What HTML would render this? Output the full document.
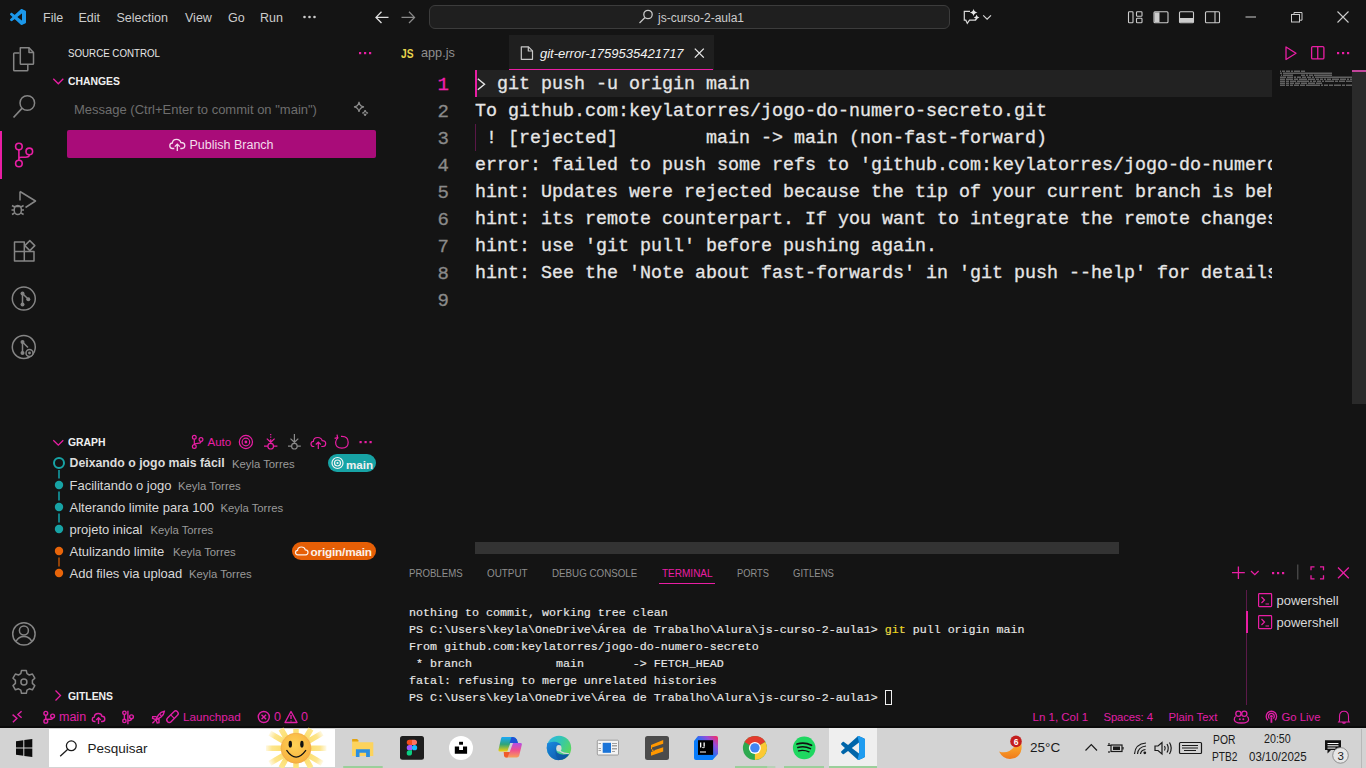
<!DOCTYPE html>
<html><head><meta charset="utf-8">
<style>
*{margin:0;padding:0;box-sizing:border-box}
html,body{width:1366px;height:768px;overflow:hidden;background:#141414;font-family:"Liberation Sans",sans-serif;color:#ccc}
.a{position:absolute;white-space:pre;line-height:1}
.ed{position:absolute;white-space:pre;font-family:"Liberation Mono",monospace;font-size:18.33px;color:#e6e6e6;line-height:27px;left:475px;margin-top:1px;-webkit-text-stroke:0.3px #e6e6e6;width:797px;overflow:hidden}
.ln{position:absolute;font-family:"Liberation Mono",monospace;font-size:19px;color:#8a8a8a;line-height:27px;left:420px;width:29px;text-align:right;margin-top:1.5px;-webkit-text-stroke:0.3px currentColor}
.term{position:absolute;white-space:pre;font-family:"Liberation Mono",monospace;font-size:11.67px;color:#e8e8e8;line-height:17px;left:409px;margin-top:1px;-webkit-text-stroke:0.15px #e8e8e8}
.pk{color:#e91e9f}
#ov{position:absolute;left:0;top:0;width:1366px;height:768px;overflow:visible}
</style></head><body>

<!-- ============ TITLE BAR ============ -->
<div class="a" style="left:429px;top:5px;width:521px;height:24px;border:1px solid #3c3c3c;border-radius:6px;background:#1f1f1f"></div>
<div class="a" style="left:43px;top:12px;font-size:12.5px;color:#cccccc">File</div>
<div class="a" style="left:78.5px;top:12px;font-size:12.5px;color:#cccccc">Edit</div>
<div class="a" style="left:116.5px;top:12px;font-size:12.5px;color:#cccccc">Selection</div>
<div class="a" style="left:185px;top:12px;font-size:12.5px;color:#cccccc">View</div>
<div class="a" style="left:228px;top:12px;font-size:12.5px;color:#cccccc">Go</div>
<div class="a" style="left:260px;top:12px;font-size:12.5px;color:#cccccc">Run</div>
<div class="a" style="left:658px;top:12px;font-size:12px;color:#cccccc">js-curso-2-aula1</div>

<!-- ============ ACTIVITY BAR ============ -->
<div class="a" style="left:0;top:131px;width:2px;height:48px;background:#e91ea4"></div>

<!-- ============ SIDEBAR ============ -->
<div class="a" style="left:68px;top:48px;font-size:11px;color:#e6e6e6;transform:scaleX(0.885);transform-origin:0 0">SOURCE CONTROL</div>
<div class="a" style="left:68px;top:76px;font-size:11px;font-weight:bold;color:#f0f0f0;transform:scaleX(0.945);transform-origin:0 0">CHANGES</div>
<div class="a" style="left:74px;top:103px;font-size:13px;color:#6e6e6e">Message (Ctrl+Enter to commit on "main")</div>
<div class="a" style="left:67px;top:130px;width:309px;height:28px;background:#a90c79;border-radius:2px"></div>
<div class="a" style="left:189.5px;top:139px;font-size:12.5px;color:#f4dcec">Publish Branch</div>


<div class="a" style="left:68px;top:437px;font-size:11px;font-weight:bold;color:#f0f0f0;transform:scaleX(0.945);transform-origin:0 0">GRAPH</div>
<div class="a" style="left:207.5px;top:436.5px;font-size:11.5px;color:#e91ea4">Auto</div>
<div class="a" style="left:69.5px;top:457.0px;font-size:12.3px;font-weight:bold;color:#dcdcdc">Deixando o jogo mais fácil</div>
<div class="a" style="left:232px;top:458.5px;font-size:11.3px;color:#9a9a9a">Keyla Torres</div>
<div class="a" style="left:69.5px;top:479.0px;font-size:13px;color:#d8d8d8">Facilitando o jogo</div>
<div class="a" style="left:178px;top:480.5px;font-size:11.3px;color:#9a9a9a">Keyla Torres</div>
<div class="a" style="left:69.5px;top:501.0px;font-size:13px;color:#d8d8d8">Alterando limite para 100</div>
<div class="a" style="left:220.5px;top:502.5px;font-size:11.3px;color:#9a9a9a">Keyla Torres</div>
<div class="a" style="left:69.5px;top:523.0px;font-size:13px;color:#d8d8d8">projeto inical</div>
<div class="a" style="left:150.5px;top:524.5px;font-size:11.3px;color:#9a9a9a">Keyla Torres</div>
<div class="a" style="left:69.5px;top:545.0px;font-size:13px;color:#d8d8d8">Atulizando limite</div>
<div class="a" style="left:173px;top:546.5px;font-size:11.3px;color:#9a9a9a">Keyla Torres</div>
<div class="a" style="left:69.5px;top:567.0px;font-size:13px;color:#d8d8d8">Add files via upload</div>
<div class="a" style="left:189px;top:568.5px;font-size:11.3px;color:#9a9a9a">Keyla Torres</div>
<div class="a" style="left:328px;top:454px;width:48px;height:18px;border-radius:9px;background:#17a3a5"></div>
<div class="a" style="left:346px;top:459px;font-size:11.6px;font-weight:bold;color:#f0f0f0">main</div>
<div class="a" style="left:292px;top:542px;width:84px;height:18px;border-radius:9px;background:#e65f06"></div>
<div class="a" style="left:310.5px;top:546.5px;font-size:11.8px;font-weight:bold;color:#fbf1ea;letter-spacing:-0.2px">origin/main</div>
<div class="a" style="left:68px;top:691px;font-size:11px;font-weight:bold;color:#f0f0f0;transform:scaleX(0.945);transform-origin:0 0">GITLENS</div>

<!-- ============ EDITOR ============ -->
<div class="a" style="left:509px;top:35px;width:205px;height:35px;background:#1f1f1f"></div>
<div class="a" style="left:509px;top:68.8px;width:204px;height:1.3px;background:#e91ea4"></div>
<div class="a" style="left:477px;top:70px;width:795px;height:27px;background:#222"></div>
<div class="a" style="left:475px;top:70px;width:2px;height:27px;background:#e91ea4"></div>
<div class="a" style="left:1352px;top:70px;width:14px;height:334px;background:#2a2a2a"></div>
<div class="a" style="left:1352px;top:70px;width:14px;height:2px;background:#c2459a"></div>
<div class="a" style="left:475px;top:542px;width:644px;height:12px;background:#333"></div>



<div class="a" style="left:401px;top:47.5px;font-size:12.5px;font-weight:bold;color:#e8d44d;transform:scaleX(0.82);transform-origin:0 0">JS</div>
<div class="a" style="left:421px;top:47px;font-size:12.7px;color:#8f8f8f">app.js</div>
<div class="a" style="left:540px;top:47px;font-size:13px;font-style:italic;color:#f2f2f2">git-error-1759535421717</div>
<div class="ln" style="top:70px;color:#f21fae">1</div>
<div class="ln" style="top:97px">2</div>
<div class="ln" style="top:124px">3</div>
<div class="ln" style="top:151px">4</div>
<div class="ln" style="top:178px">5</div>
<div class="ln" style="top:205px">6</div>
<div class="ln" style="top:232px">7</div>
<div class="ln" style="top:259px">8</div>
<div class="ln" style="top:286px">9</div>
<div class="ed" style="top:70px">  git push -u origin main</div>
<div class="ed" style="top:97px">To github.com:keylatorres/jogo-do-numero-secreto.git</div>
<div class="ed" style="top:124px"> ! [rejected]        main -> main (non-fast-forward)</div>
<div class="ed" style="top:151px">error: failed to push some refs to 'github.com:keylatorres/jogo-do-numero-secreto.git'</div>
<div class="ed" style="top:178px">hint: Updates were rejected because the tip of your current branch is behind</div>
<div class="ed" style="top:205px">hint: its remote counterpart. If you want to integrate the remote changes,</div>
<div class="ed" style="top:232px">hint: use 'git pull' before pushing again.</div>
<div class="ed" style="top:259px">hint: See the 'Note about fast-forwards' in 'git push --help' for details.</div>
<div class="a" style="left:475px;top:124px;width:1px;height:27px;background:#5a1747"></div>

<!-- ============ PANEL ============ -->
<div class="a" style="left:409px;top:568px;font-size:11px;color:#8f8f8f;transform:scaleX(0.877);transform-origin:0 0">PROBLEMS</div>
<div class="a" style="left:487px;top:568px;font-size:11px;color:#8f8f8f;transform:scaleX(0.898);transform-origin:0 0">OUTPUT</div>
<div class="a" style="left:552px;top:568px;font-size:11px;color:#8f8f8f;transform:scaleX(0.889);transform-origin:0 0">DEBUG CONSOLE</div>
<div class="a" style="left:661.5px;top:568px;font-size:11px;color:#e91ea4;transform:scaleX(0.91);transform-origin:0 0">TERMINAL</div>
<div class="a" style="left:659px;top:582.5px;width:56px;height:1.5px;background:#e91ea4"></div>
<div class="a" style="left:737px;top:568px;font-size:11px;color:#8f8f8f;transform:scaleX(0.845);transform-origin:0 0">PORTS</div>
<div class="a" style="left:793px;top:568px;font-size:11px;color:#8f8f8f;transform:scaleX(0.87);transform-origin:0 0">GITLENS</div>
<div class="a" style="left:1276.5px;top:594.3px;font-size:13px;color:#d8d8d8">powershell</div>
<div class="a" style="left:1276.5px;top:616.3px;font-size:13px;color:#d8d8d8">powershell</div>
<div class="a" style="left:1246px;top:590px;width:1px;height:115px;background:#5c1a4a"></div>
<div class="a" style="left:1245.5px;top:611px;width:2px;height:22px;background:#e91ea4"></div>

<div class="term" style="top:604px">nothing to commit, working tree clean</div>
<div class="term" style="top:621px">PS C:\Users\keyla\OneDrive\Área de Trabalho\Alura\js-curso-2-aula1&gt; <span style="color:#f1d700">git</span> pull origin main</div>
<div class="term" style="top:638px">From github.com:keylatorres/jogo-do-numero-secreto</div>
<div class="term" style="top:655px"> * branch            main       -&gt; FETCH_HEAD</div>
<div class="term" style="top:672px">fatal: refusing to merge unrelated histories</div>
<div class="term" style="top:689px">PS C:\Users\keyla\OneDrive\Área de Trabalho\Alura\js-curso-2-aula1&gt; </div>
<div class="a" style="left:885px;top:690px;width:7px;height:15px;border:1px solid #f0f0f0"></div>

<!-- ============ TASKBAR ============ -->
<div class="a" style="left:0;top:728px;width:1366px;height:40px;background:#d3d3d3"></div>
<div class="a" style="left:49px;top:729px;width:286px;height:38px;background:#fff"></div>


<div class="a" style="left:59px;top:711px;font-size:12.5px;color:#e01fa6">main</div>
<div class="a" style="left:183px;top:711px;font-size:11.7px;color:#e01fa6">Launchpad</div>
<div class="a" style="left:274px;top:711px;font-size:12.5px;color:#e01fa6">0</div>
<div class="a" style="left:301px;top:711px;font-size:12.5px;color:#e01fa6">0</div>
<div class="a" style="left:1032.5px;top:712px;font-size:11.5px;color:#e01fa6">Ln 1, Col 1</div>
<div class="a" style="left:1103.5px;top:712px;font-size:11.3px;color:#e01fa6;letter-spacing:-0.1px">Spaces: 4</div>
<div class="a" style="left:1168.5px;top:712px;font-size:11.3px;color:#e01fa6">Plain Text</div>
<div class="a" style="left:1281.5px;top:712px;font-size:11.3px;color:#e01fa6">Go Live</div>
<!-- taskbar text -->
<div class="a" style="left:87.5px;top:742px;font-size:13.5px;color:#1b1b1b">Pesquisar</div>
<div class="a" style="left:1030px;top:740.5px;font-size:13.5px;color:#1a1a1a">25°C</div>
<div class="a" style="left:1213px;top:733.5px;font-size:12px;color:#1a1a1a;transform:scaleX(0.86);transform-origin:0 0">POR</div>
<div class="a" style="left:1212px;top:750.5px;font-size:12px;color:#1a1a1a;transform:scaleX(0.85);transform-origin:0 0">PTB2</div>
<div class="a" style="left:1264px;top:732.5px;font-size:12px;color:#1a1a1a;transform:scaleX(0.89);transform-origin:0 0">20:50</div>
<div class="a" style="left:1249px;top:750.5px;font-size:12px;color:#1a1a1a;transform:scaleX(0.96);transform-origin:0 0">03/10/2025</div>
<svg id="ov" viewBox="0 0 1366 768">
<!-- vscode logo -->
<g transform="translate(10,9) scale(0.16)">
<path fill="#0065a9" d="M96.5 10.8L75.9 0.9C73.5-0.3 70.7 0.2 68.8 2.1L29.4 38L12.3 25C10.7 23.8 8.5 23.9 7 25.2L1.5 30.2C-0.3 31.9-0.3 34.7 1.5 36.4L16.4 50L1.5 63.6C-0.3 65.3-0.3 68.1 1.5 69.8L7 74.8C8.5 76.1 10.7 76.2 12.3 75L29.4 62L68.8 97.9C70.7 99.8 73.5 100.3 75.9 99.1L96.5 89.2C98.7 88.1 100 85.9 100 83.5V16.5C100 14.1 98.7 11.9 96.5 10.8ZM75 72.7L45.1 50L75 27.3V72.7Z"/>
<path fill="#1f9cf0" d="M96.5 10.8L75.9 0.9C73.5-0.3 70.7 0.2 68.8 2.1L29.4 38L12.3 25C10.7 23.8 8.5 23.9 7 25.2L1.5 30.2C-0.3 31.9-0.3 34.7 1.5 36.4L16.4 50L45.1 50L75 27.3V72.7L45.1 50L16.4 50L1.5 63.6C-0.3 65.3-0.3 68.1 1.5 69.8L7 74.8C8.5 76.1 10.7 76.2 12.3 75L29.4 62L68.8 97.9C70.7 99.8 73.5 100.3 75.9 99.1L96.5 89.2C98.7 88.1 100 85.9 100 83.5V16.5C100 14.1 98.7 11.9 96.5 10.8Z" opacity="0.9"/>
</g>
<!-- menu dots -->
<g fill="#cccccc"><circle cx="304.5" cy="17" r="1.3"/><circle cx="309.5" cy="17" r="1.3"/><circle cx="314.5" cy="17" r="1.3"/></g>
<!-- nav arrows -->
<g fill="none" stroke-width="1.3">
<path d="M388.5 17.4H376M381.5 11.8L376 17.4L381.5 23" stroke="#e0e0e0"/>
<path d="M401.5 17.4H414M409 11.8L414.5 17.4L409 23" stroke="#8a8a8a"/>
</g>
<!-- search icon title -->
<g fill="none" stroke="#c8c8c8" stroke-width="1.3"><circle cx="648" cy="14.5" r="4.2"/><path d="M645 17.5L639.5 23"/></g>
<!-- copilot chat -->
<g fill="none" stroke="#d8d8d8" stroke-width="1.2">
<path d="M970 11.4H964.3V20.2H965.8L967.3 23.3L969.5 20.2H975.5V18.8"/>
<path d="M983.2 15.4L987.1 19.1L991 15.4"/>
</g>
<path d="M973.6 8.8Q974.1 12 977.5 12.5Q974.1 13 973.6 16.2Q973.1 13 969.7 12.5Q973.1 12 973.6 8.8Z" fill="#e8e8e8"/>
<path d="M976.6 14.6Q976.9 17 979.4 17.4Q976.9 17.8 976.6 20.2Q976.3 17.8 973.8 17.4Q976.3 17 976.6 14.6Z" fill="#e8e8e8"/>
<!-- layout icons -->
<g fill="none" stroke="#cccccc" stroke-width="1.1">
<rect x="1128.5" y="11.8" width="4.5" height="11" rx="0.8"/>
<rect x="1136.5" y="11.8" width="5.5" height="4.5" rx="0.8"/>
<rect x="1136.5" y="18.3" width="5.5" height="4.5" rx="0.8"/>
<rect x="1154" y="11.8" width="14" height="11" rx="1"/>
<rect x="1179.5" y="11.8" width="14" height="11" rx="1"/>
<rect x="1205.5" y="11.8" width="14" height="11" rx="1"/>
<path d="M1215 11.8V22.8"/>
</g>
<rect x="1154.5" y="12.3" width="5" height="10" fill="#cccccc"/>
<rect x="1180" y="18" width="13" height="4.3" fill="#cccccc"/>
<!-- window controls -->
<g fill="none" stroke="#cccccc" stroke-width="1">
<path d="M1245.5 17H1256"/>
<rect x="1291.5" y="14.5" width="8" height="7.5"/>
<path d="M1294 14.5V12.5H1302V20.2H1299.5"/>
<path d="M1337.5 11.5L1348.5 22.5M1348.5 11.5L1337.5 22.5" stroke-width="1.1"/>
</g>

<!-- ===== activity bar ===== -->
<g fill="none" stroke="#858585" stroke-width="1.5" stroke-linejoin="round">
<!-- files -->
<path d="M19.5 53H14.5Q13.7 53 13.7 53.8V70Q13.7 70.8 14.5 70.8H27Q27.8 70.8 27.8 70V64.5"/>
<path d="M20.3 47.8H29L33.5 52.5V63.5Q33.5 64.3 32.7 64.3H21Q20.3 64.3 20.3 63.5Z"/>
<path d="M29 47.8V52.5H33.5"/>
<!-- search -->
<circle cx="27.3" cy="103" r="7.3"/>
<path d="M22.2 108.2L13.5 117.5" stroke-width="1.7"/>
<!-- run debug -->
<path d="M20 191.5V200.5M20 191.5L35.5 201L25.5 207.5"/>
<ellipse cx="17.8" cy="210" rx="3.6" ry="4.6"/>
<path d="M12 205.5L14.5 207M23.6 205.5L21 207M11.5 210H14.2M24 210H21.4M12 214.5L14.5 213M23.6 214.5L21 213M14.5 206.5H21"/>
<!-- extensions -->
<path d="M14.5 242H24.3V261H14.5ZM14.5 251.5H34V261H24.3"/>
<path d="M24.8 245.6L29.8 240.6L34.8 245.6L29.8 250.6Z"/>
<!-- gitlens -->
<circle cx="23.8" cy="298.6" r="11.5"/>
<path d="M22.5 293.5V304.5M22.5 293.5L28.3 299.2"/>
<circle cx="23.8" cy="347" r="11.5"/>
<path d="M22.5 342V353M22.5 342L28 347.5"/>
<!-- account -->
<circle cx="23.9" cy="633.9" r="11.2"/>
<circle cx="23.9" cy="630.5" r="4.5"/>
<path d="M16 641.5Q18.5 636.5 23.9 636.5Q29.3 636.5 31.8 641.5"/>
</g>
<g fill="#858585">
<circle cx="22.5" cy="293.4" r="2"/><circle cx="28.3" cy="299.2" r="2"/><circle cx="22.5" cy="304.5" r="2"/>
<circle cx="22.5" cy="342" r="2"/><circle cx="22.5" cy="353" r="2"/>
</g>
<g fill="none" stroke="#858585" stroke-width="1.5"><circle cx="29.5" cy="353" r="3.5" fill="#141414"/></g>
<circle cx="29.5" cy="353" r="1.4" fill="#858585"/>
<!-- gear -->
<path fill="none" stroke="#858585" stroke-width="1.5" stroke-linejoin="round" d="M21.5 670.5H26.3L27 673.7L29.3 675L32.4 674L34.8 678.2L32.4 680.4V683.4L34.8 685.6L32.4 689.8L29.3 688.8L27 690.1L26.3 693.3H21.5L20.8 690.1L18.5 688.8L15.4 689.8L13 685.6L15.4 683.4V680.4L13 678.2L15.4 674L18.5 675L20.8 673.7Z"/>
<circle cx="23.9" cy="681.9" r="3" fill="none" stroke="#858585" stroke-width="1.5"/>
<!-- scm (active) -->
<g fill="none" stroke="#e91ea4" stroke-width="1.6">
<circle cx="18.9" cy="146.6" r="3.3"/>
<circle cx="29.3" cy="151.4" r="3.3"/>
<circle cx="18.9" cy="163.5" r="3.3"/>
<path d="M18.9 149.9V160.2M29.3 154.7Q29.3 157.2 25.5 157.2H21Q18.9 157.2 18.9 159"/>
</g>

<!-- ===== sidebar icons ===== -->
<g fill="#e91ea4"><rect x="359" y="52" width="2.2" height="2.2"/><rect x="364" y="52" width="2.2" height="2.2"/><rect x="369" y="52" width="2.2" height="2.2"/></g>
<g fill="none" stroke="#e91ea4" stroke-width="1.3">
<path d="M53.3 78.8L58.3 83.8L63.3 78.8"/>
<path d="M53.3 440.2L58.3 445.2L63.3 440.2"/>
<path d="M55.5 690.5L60.5 695.5L55.5 700.5"/>
</g>
<g fill="none" stroke="#8a8a8a" stroke-width="1.2">
<path d="M359 101.8Q359.6 106.3 364 106.9Q359.6 107.5 359 112Q358.4 107.5 354 106.9Q358.4 106.3 359 101.8Z"/>
<path d="M365.1 110Q365.5 112.6 368 113Q365.5 113.4 365.1 116Q364.7 113.4 362.2 113Q364.7 112.6 365.1 110Z"/>
</g>
<!-- cloud upload in button -->
<g fill="none" stroke="#f4dcec" stroke-width="1.3">
<path d="M174.3 148.5H172.5Q169.8 148.5 169.8 145.8Q169.8 143.2 172.4 143Q172.6 139.3 176.6 139.3Q180 139.3 180.8 142.5Q184.8 142.5 184.8 145.6Q184.8 148.5 182 148.5H180.3"/>
<path d="M177.3 151V144.3M174.8 146.6L177.3 144.1L179.8 146.6"/>
</g>
<!-- graph header icons -->
<g fill="none" stroke="#e91ea4" stroke-width="1.2">
<circle cx="194.3" cy="437.3" r="1.9"/><circle cx="194.3" cy="446.5" r="1.9"/><circle cx="201" cy="439.5" r="1.9"/>
<path d="M194.3 439.2V444.6M201 441.4Q201 443.3 197.5 443.3Q194.3 443.3 194.3 444.6"/>
<circle cx="245.9" cy="442" r="6.6"/><circle cx="245.9" cy="442" r="3.8"/>
<circle cx="270.7" cy="446.2" r="2.8"/><path d="M264 446.2H267.9M273.5 446.2H277.4M266.8 438.6L270.7 442.3L274.6 438.6M270.7 434V435.2M270.7 436.6V437.8M270.7 439.2V442"/>
<path d="M314.3 446.5H313.5Q311 446.5 311 444Q311 441.6 313.4 441.4Q313.6 437.5 317.8 437.5Q321.3 437.5 322.2 440.7Q325.7 440.7 325.7 443.6Q325.7 446.5 323 446.5H321.3"/>
<path d="M318.3 449V442.2M315.8 444.5L318.3 442L320.8 444.5"/>
<path d="M338.2 437.5Q335.6 439.6 335.6 442.3Q335.6 448.2 341.9 448.2Q348.2 448.2 348.2 442.3Q348.2 436.4 341.9 436.4H341"/>
<path d="M337 434.6L337.6 437.6L334.6 438.4"/>
</g>
<g fill="#e91ea4"><circle cx="245.9" cy="442" r="1.4"/><rect x="359.5" y="441" width="2.2" height="2.2"/><rect x="364.5" y="441" width="2.2" height="2.2"/><rect x="369.5" y="441" width="2.2" height="2.2"/></g>
<g fill="none" stroke="#8a8a8a" stroke-width="1.2">
<circle cx="294.4" cy="446.2" r="2.8"/><path d="M288 446.2H291.6M297.2 446.2H300.8M290.5 438.6L294.4 442.3L298.3 438.6M294.4 434V442.3"/>
</g>
<!-- graph rails -->
<g stroke="#127f85" stroke-width="2">
<path d="M59 470V478.5M59 491.5V500.5M59 513.5V522.5"/>
</g>
<path d="M59 557.5V566.5" stroke="#8f4108" stroke-width="2"/>
<circle cx="59" cy="463" r="5" fill="none" stroke="#17a3a5" stroke-width="2"/>
<g fill="#17a3a5"><circle cx="59" cy="485" r="4.2"/><circle cx="59" cy="507" r="4.2"/><circle cx="59" cy="529" r="4.2"/></g>
<g fill="#e8650a"><circle cx="59" cy="551" r="4.2"/><circle cx="59" cy="573" r="4.2"/></g>
<!-- badge icons -->
<g fill="none" stroke="#f4f4f4" stroke-width="1.2"><circle cx="337.5" cy="463" r="5.5"/><circle cx="337.5" cy="463" r="3"/></g>
<circle cx="337.5" cy="463" r="1.1" fill="#f4f4f4"/>
<path fill="none" stroke="#fbf1ea" stroke-width="1.2" d="M298.5 554.8H297.8Q295.5 554.8 295.5 552.6Q295.5 550.5 297.6 550.3Q297.8 547 301.4 547Q304.5 547 305.3 549.8Q308 549.8 308 552.3Q308 554.8 305.6 554.8Z"/>

<!-- ===== editor ===== -->
<g fill="none" stroke="#c8c8c8" stroke-width="1.2" stroke-linejoin="round">
<path d="M521.3 46.8H528.5L532.5 50.8V59.3H521.3Z"/><path d="M528.3 46.8V51H532.5"/>
</g>
<path d="M694.8 48.6L703.8 57.6M703.8 48.6L694.8 57.6" stroke="#e8e8e8" stroke-width="1.3"/>
<path d="M477.8 78.8L484.5 84.3L477.8 89.8" fill="none" stroke="#e6e6e6" stroke-width="1.4"/>
<!-- editor actions -->
<g fill="none" stroke="#e91ea4" stroke-width="1.3" stroke-linejoin="round">
<path d="M1286 47L1296 53.3L1286 59.5Z"/>
<rect x="1311.6" y="46.6" width="12.3" height="12.3" rx="1.2"/><path d="M1317.75 46.6V58.9"/>
</g>
<g fill="#e91ea4"><rect x="1337" y="52" width="2.2" height="2.2"/><rect x="1342" y="52" width="2.2" height="2.2"/><rect x="1347" y="52" width="2.2" height="2.2"/></g>
<!-- minimap -->
<g fill="#a0a0a0" opacity="0.55"><rect x="1280" y="70.5" width="1" height="1.5"/><rect x="1282" y="70.5" width="3" height="1.5"/><rect x="1286" y="70.5" width="4" height="1.5"/><rect x="1291" y="70.5" width="2" height="1.5"/><rect x="1294" y="70.5" width="6" height="1.5"/><rect x="1301" y="70.5" width="4" height="1.5"/><rect x="1280" y="72.5" width="2" height="1.5"/><rect x="1283" y="72.5" width="49" height="1.5"/><rect x="1281" y="74.5" width="1" height="1.5"/><rect x="1283" y="74.5" width="10" height="1.5"/><rect x="1301" y="74.5" width="4" height="1.5"/><rect x="1306" y="74.5" width="2" height="1.5"/><rect x="1309" y="74.5" width="4" height="1.5"/><rect x="1314" y="74.5" width="18" height="1.5"/><rect x="1280" y="76.5" width="6" height="1.5"/><rect x="1287" y="76.5" width="6" height="1.5"/><rect x="1294" y="76.5" width="2" height="1.5"/><rect x="1297" y="76.5" width="4" height="1.5"/><rect x="1302" y="76.5" width="4" height="1.5"/><rect x="1307" y="76.5" width="4" height="1.5"/><rect x="1312" y="76.5" width="2" height="1.5"/><rect x="1315" y="76.5" width="37" height="1.5"/><rect x="1280" y="78.5" width="5" height="1.5"/><rect x="1286" y="78.5" width="7" height="1.5"/><rect x="1294" y="78.5" width="4" height="1.5"/><rect x="1299" y="78.5" width="8" height="1.5"/><rect x="1308" y="78.5" width="7" height="1.5"/><rect x="1316" y="78.5" width="3" height="1.5"/><rect x="1320" y="78.5" width="3" height="1.5"/><rect x="1324" y="78.5" width="2" height="1.5"/><rect x="1327" y="78.5" width="4" height="1.5"/><rect x="1332" y="78.5" width="7" height="1.5"/><rect x="1340" y="78.5" width="6" height="1.5"/><rect x="1347" y="78.5" width="2" height="1.5"/><rect x="1350" y="78.5" width="2" height="1.5"/><rect x="1280" y="80.5" width="5" height="1.5"/><rect x="1286" y="80.5" width="3" height="1.5"/><rect x="1290" y="80.5" width="6" height="1.5"/><rect x="1297" y="80.5" width="12" height="1.5"/><rect x="1310" y="80.5" width="2" height="1.5"/><rect x="1313" y="80.5" width="3" height="1.5"/><rect x="1317" y="80.5" width="4" height="1.5"/><rect x="1322" y="80.5" width="2" height="1.5"/><rect x="1325" y="80.5" width="9" height="1.5"/><rect x="1335" y="80.5" width="3" height="1.5"/><rect x="1339" y="80.5" width="6" height="1.5"/><rect x="1346" y="80.5" width="6" height="1.5"/><rect x="1280" y="82.5" width="5" height="1.5"/><rect x="1286" y="82.5" width="3" height="1.5"/><rect x="1290" y="82.5" width="4" height="1.5"/><rect x="1295" y="82.5" width="5" height="1.5"/><rect x="1301" y="82.5" width="6" height="1.5"/><rect x="1308" y="82.5" width="7" height="1.5"/><rect x="1316" y="82.5" width="6" height="1.5"/><rect x="1280" y="84.5" width="5" height="1.5"/><rect x="1286" y="84.5" width="3" height="1.5"/><rect x="1290" y="84.5" width="3" height="1.5"/><rect x="1294" y="84.5" width="5" height="1.5"/><rect x="1300" y="84.5" width="5" height="1.5"/><rect x="1306" y="84.5" width="14" height="1.5"/><rect x="1321" y="84.5" width="2" height="1.5"/><rect x="1324" y="84.5" width="4" height="1.5"/><rect x="1329" y="84.5" width="4" height="1.5"/><rect x="1334" y="84.5" width="7" height="1.5"/><rect x="1342" y="84.5" width="3" height="1.5"/><rect x="1346" y="84.5" width="6" height="1.5"/></g>
<!-- panel actions -->
<g fill="none" stroke="#e91ea4" stroke-width="1.3">
<path d="M1238.4 566.5V579M1232 572.7H1244.8"/>
<path d="M1251 571L1254.8 574.6L1258.6 571"/>
<path d="M1311 570.3V566.8H1314.5M1320 566.8H1323.5V570.3M1323.5 575.3V578.8H1320M1314.5 578.8H1311V575.3"/>
<path d="M1338 567.5L1348.8 578.3M1348.8 567.5L1338 578.3"/>
</g>
<path d="M1297.8 564.5V579.5" stroke="#5a5a5a" stroke-width="1"/>
<g fill="#e91ea4"><rect x="1272" y="572" width="2.2" height="2.2"/><rect x="1277" y="572" width="2.2" height="2.2"/><rect x="1282" y="572" width="2.2" height="2.2"/></g>
<!-- terminal list icons -->
<g fill="none" stroke="#e91ea4" stroke-width="1.2">
<rect x="1258.6" y="593.6" width="13" height="13" rx="0.8"/><path d="M1261.5 597L1264.5 600L1261.5 603M1265.5 604H1269"/>
<rect x="1258.6" y="615.6" width="13" height="13" rx="0.8"/><path d="M1261.5 619L1264.5 622L1261.5 625M1265.5 626H1269"/>
</g>
<!-- ===== status bar ===== -->
<g fill="none" stroke="#e01fa6" stroke-width="1.4">
<path d="M12.6 714.6L16.9 718.3L12.9 722.2M21.6 711.2L17.9 714.6L21.6 717.7"/>
<circle cx="45.8" cy="713.3" r="1.9"/><circle cx="45.8" cy="721.2" r="1.9"/><circle cx="52.6" cy="716" r="1.9"/>
<path d="M45.8 715.2V719.3M52.6 717.9Q52.6 719.3 49.5 719.3Q45.8 719.3 45.8 719.8"/>
<path d="M95.5 721.5H94.5Q92.3 721.5 92.3 719.3Q92.3 717.3 94.3 717Q94.6 713.5 98.3 713.5Q101.3 713.5 102 716.3Q104.8 716.3 104.8 719Q104.8 721.5 102.3 721.5H101"/>
<path d="M98.5 724V717.8M96.2 720L98.5 717.7L100.8 720"/>
<circle cx="124.4" cy="712.8" r="1.7"/><circle cx="124.4" cy="720.9" r="1.7"/><path d="M124.4 714.5V719.2M127.9 710.8V724.2M131.5 718.7Q131.5 720.6 127.9 720.6"/><circle cx="131.5" cy="716.8" r="1.9"/>
<path d="M155.3 720.3L158.5 714.8Q161 711.5 164.4 711.2Q164.1 714.6 160.8 717.1L155.3 720.3ZM156.5 716.6L152.7 716.6L152.5 718.4L155.2 719.4M159 718.8L159 722.6L157.2 722.9L156.2 720.3M154.5 721.2L152.4 723.3"/><circle cx="160.6" cy="715.1" r="0.9" fill="#e01fa6" stroke="none"/><rect x="165.5" y="714.2" width="14" height="5" rx="2.5" transform="rotate(-45 172.5 716.7)"/><path d="M170.5 714.7L174.5 718.7" stroke-width="1.2"/>
<circle cx="263.8" cy="717" r="5.5"/><path d="M261.5 714.7L266.1 719.3M266.1 714.7L261.5 719.3"/>
<path d="M291 711.5L297 722.5H285Z" stroke-linejoin="round"/><path d="M291 715V719M291 720.5V721.5"/>
</g>
<g fill="none" stroke="#e01fa6" stroke-width="1.3">
<circle cx="1238.4" cy="713.8" r="2.6"/><circle cx="1244.3" cy="713.8" r="2.6"/>
<path d="M1235.8 716.5Q1234.3 717 1234.3 719.5Q1234.3 723 1241.4 723Q1248.6 723 1248.6 719.5Q1248.6 717 1247 716.5"/>
<path d="M1267.8 720.2A5.2 5.2 0 1 1 1275 720.2M1269.5 718.5A2.9 2.9 0 1 1 1273.3 718.5"/>
<path d="M1271.4 717.5V722.8" stroke-width="1.8"/>
<path d="M1339.5 720.8V716.5Q1339.5 711.3 1344 711.3Q1348.5 711.3 1348.5 716.5V720.8L1349.3 722H1338.7ZM1342.5 722.5Q1344 724 1345.5 722.5" stroke-width="1.1"/>
</g>
<g fill="#e01fa6"><circle cx="1239.8" cy="719.2" r="1"/><circle cx="1243.3" cy="719.2" r="1"/><circle cx="1271.4" cy="716.2" r="1.3"/></g>

<!-- ===== taskbar ===== -->
<defs>
<radialGradient id="sunF" cx="0.45" cy="0.4" r="0.6"><stop offset="0" stop-color="#ffd256"/><stop offset="1" stop-color="#f7b13f"/></radialGradient>
<linearGradient id="copG" x1="0" y1="0" x2="1" y2="1"><stop offset="0" stop-color="#1aa0f0"/><stop offset="0.4" stop-color="#f6d21a"/><stop offset="0.6" stop-color="#ee5ab8"/><stop offset="1" stop-color="#f7a04a"/></linearGradient>
<linearGradient id="edgG" x1="0" y1="0" x2="1" y2="1"><stop offset="0" stop-color="#26a4e0"/><stop offset="0.6" stop-color="#34c6a0"/><stop offset="1" stop-color="#5fdc5a"/></linearGradient>
<linearGradient id="ijG" x1="0" y1="1" x2="1" y2="0"><stop offset="0.45" stop-color="#087cfa"/><stop offset="0.75" stop-color="#9a4bd8"/><stop offset="1" stop-color="#fe2857"/></linearGradient>
<linearGradient id="moonG" x1="0" y1="0" x2="0" y2="1"><stop offset="0" stop-color="#ffc43a"/><stop offset="1" stop-color="#f07a1a"/></linearGradient>
</defs>
<rect x="0" y="726" width="1366" height="2" fill="#0a0a0a"/>
<!-- windows logo -->
<g fill="#0c0c0c">
<path d="M16 741.2L23.3 740.2V747.5H16Z"/><path d="M24.3 740.1L32.3 739V747.5H24.3Z"/>
<path d="M16 748.5H23.3V755.8L16 754.8Z"/><path d="M24.3 748.5H32.3V757L24.3 755.9Z"/>
</g>
<!-- search -->
<g fill="none" stroke="#1a1a1a" stroke-width="1.3"><circle cx="71.3" cy="745.8" r="4.9"/><path d="M67.8 749.3L60.2 756.2"/></g>
<!-- sun emoji -->
<radialGradient id="rayG" gradientUnits="userSpaceOnUse" cx="296" cy="748.2" r="32"><stop offset="0.45" stop-color="#fcdf6e"/><stop offset="0.75" stop-color="#fde58c"/><stop offset="1" stop-color="#fde58c" stop-opacity="0"/></radialGradient>
<g stroke="url(#rayG)" stroke-width="5.5" stroke-linecap="butt">
<path d="M266 748.2H282M310 748.2H326.5M296 729V734M296 762V768M269.8 733.1L283 740.8M309 755.6L322.2 763.3M269.8 763.3L283 755.6M309 740.8L322.2 733.1M281 729L286 737.5M306 759L311 767.8M281 767.8L286 759M306 737.5L311 729"/>
</g>
<circle cx="296" cy="748.2" r="15.2" fill="url(#sunF)"/>
<circle cx="296" cy="748.2" r="15" fill="none" stroke="#e89a5a" stroke-width="0.6" opacity="0.6"/>
<g fill="#111"><ellipse cx="290.3" cy="744.2" rx="1.7" ry="3.4"/><ellipse cx="301.9" cy="744.2" rx="1.7" ry="3.4"/></g>
<path d="M286.5 750.2Q296 764 306 750.2" fill="none" stroke="#111" stroke-width="1.2"/>
<!-- explorer -->
<path d="M352.1 741H357.5L359 742.2H373.3V756H352.1Z" fill="#fcd35d"/>
<path d="M352.1 739.2Q352.1 739 352.5 739H357L358.5 740.2V741.5H352.1Z" fill="#e3a410"/>
<path d="M355.9 749.2H369.9V756.9H366.1V752.8H359.5V756.9H355.9Z" fill="#2c8fe0"/>
<!-- figma -->
<rect x="400" y="736" width="24" height="23.8" rx="2.5" fill="#1e1e1e"/>
<path d="M409.4 739.7H412V745H409.4A2.65 2.65 0 0 1 409.4 739.7Z" fill="#f24e1e"/>
<path d="M412 739.7H414.4A2.65 2.65 0 0 1 414.4 745H412Z" fill="#ff7262"/>
<path d="M409.4 745H412V750.3H409.4A2.65 2.65 0 0 1 409.4 745Z" fill="#a259ff"/>
<circle cx="414.5" cy="747.65" r="2.65" fill="#1abcfe"/>
<path d="M409.4 750.3H412V753A2.65 2.65 0 1 1 409.4 750.3Z" fill="#0acf83"/>
<!-- white circle app -->
<circle cx="461" cy="747.9" r="12" fill="#fff"/>
<rect x="459.1" y="741.8" width="3.9" height="2.9" fill="#000"/>
<path d="M454.8 746.6H459.1V750H463V746.6H467.1V753.8H454.8Z" fill="#000"/>
<!-- copilot -->
<linearGradient id="copA" x1="0" y1="0" x2="0" y2="1"><stop offset="0" stop-color="#1aa8f8"/><stop offset="0.5" stop-color="#2ea47a"/><stop offset="1" stop-color="#f8d208"/></linearGradient>
<linearGradient id="copB" x1="0" y1="0" x2="0" y2="1"><stop offset="0" stop-color="#b34fe6"/><stop offset="0.5" stop-color="#f0508e"/><stop offset="1" stop-color="#f8a058"/></linearGradient>
<path d="M502 737H513Q515.5 737 516.8 739.5L518 743H510.3L507.3 751.6H500Q498.2 751.6 498.5 749.8L501 738.7Q501.4 737 502 737Z" fill="url(#copA)"/>
<path d="M511.5 737H513Q515.5 737 516.8 739.5L518 743H509.5Z" fill="#1f52d6"/>
<path d="M513 743H520.5Q522.2 743 521.8 744.8L519.2 755.8Q518.6 757.5 517 757.5H506Q504.5 757.5 504 755.5L503.8 752H509.7Z" fill="url(#copB)"/>
<path d="M503.8 752H509.7L507.5 757.5H506Q504.5 757.5 504 755.5Z" fill="#ef5a2a"/>
<!-- edge -->
<linearGradient id="edgA" x1="0" y1="0" x2="1" y2="0.6"><stop offset="0" stop-color="#2bb3ef"/><stop offset="0.5" stop-color="#33c6b2"/><stop offset="1" stop-color="#5ad85a"/></linearGradient>
<linearGradient id="edgB" x1="0" y1="0" x2="1" y2="1"><stop offset="0" stop-color="#1a8ae0"/><stop offset="1" stop-color="#0d4fa0"/></linearGradient>
<circle cx="559" cy="747.9" r="12.2" fill="url(#edgA)"/>
<path d="M547.2 743.2Q551 741.3 555 741.7Q559.5 742.3 561.2 745.2L556.8 747Q555.3 750.8 557.5 753Q561.5 756 569.4 753.8Q566 759.6 559.5 760.1Q551.5 760.6 547.6 752.5Q546 747.5 547.2 743.2Z" fill="url(#edgB)"/>
<path d="M556.5 746.5Q555 751 558 753.3Q562 755.8 569.4 753.8Q566 759.6 559.5 760.1Q556 758 555.5 753Q555 749 556.5 746.5Z" fill="#0e559f" opacity="0.6"/>
<ellipse cx="558.9" cy="748.3" rx="2.6" ry="3.2" fill="#d8d8d8"/>
<path d="M559.8 751.2Q563.5 753.6 569.2 753.7" fill="none" stroke="#d8d8d8" stroke-width="1.1"/>
<!-- window app -->
<rect x="597.3" y="740.2" width="21.2" height="14.8" rx="1" fill="#f4f4f4" stroke="#8a8a8a" stroke-width="0.8"/>
<rect x="602.7" y="742.8" width="8.3" height="10" fill="#1a74d8"/>
<g fill="#a0a0a0"><rect x="612" y="743" width="5" height="1"/><rect x="612" y="745" width="5" height="1.5"/><rect x="612" y="748" width="5" height="1.5"/><rect x="612" y="751" width="3" height="1"/><rect x="598.5" y="743" width="2.5" height="1"/><rect x="598.5" y="748" width="2.5" height="1"/><rect x="598.5" y="750" width="2.5" height="1"/></g>
<!-- sublime -->
<rect x="645" y="736" width="24" height="24" rx="2.5" fill="#4b4b4b"/>
<path d="M663.2 740V743.8L652 747.5V751L663.2 747.3V751.5L651 755.7V752L655 750.5L651 749V745Z" fill="#ff9800"/>
<!-- intellij -->
<path d="M698 736H716Q718 736 718 738V754L712.5 760H696Q694 760 694 758V741Z" fill="url(#ijG)"/>
<rect x="698" y="740.2" width="15.1" height="14.7" fill="#000"/>
<g fill="#fff"><rect x="700" y="751.5" width="6" height="1"/><rect x="700" y="742.5" width="1.3" height="5"/><rect x="703.5" y="742.5" width="1.3" height="4.2"/><path d="M702 747.3H704.8V747.8Q703 748.5 702 747.8Z"/></g>
<!-- chrome -->
<circle cx="754.9" cy="747.9" r="12" fill="#2da94f"/>
<path d="M754.9 747.9L744.5 741.9A12 12 0 0 1 765.3 741.9Z" fill="#e33b2e"/>
<path d="M754.9 747.9L765.3 741.9A12 12 0 0 1 754.9 759.9Z" fill="#fcc934"/>
<circle cx="754.9" cy="747.9" r="6" fill="#fff"/>
<circle cx="754.9" cy="747.9" r="4.7" fill="#4285f4"/>
<!-- spotify -->
<circle cx="804.2" cy="747.9" r="11.3" fill="#1ed760"/>
<g fill="none" stroke="#111" stroke-linecap="round"><path d="M797 744Q804.5 741.8 811.5 745.2" stroke-width="1.8"/><path d="M797.8 747.5Q804.5 745.8 810.5 748.6" stroke-width="1.5"/><path d="M798.5 750.8Q804 749.5 809 751.8" stroke-width="1.3"/></g>
<!-- vscode active -->
<rect x="829" y="728" width="48" height="40" fill="#efefef"/>
<g transform="translate(841,736) scale(0.24)">
<path fill="#0065a9" d="M96.5 10.8L75.9 0.9C73.5-0.3 70.7 0.2 68.8 2.1L29.4 38L12.3 25C10.7 23.8 8.5 23.9 7 25.2L1.5 30.2C-0.3 31.9-0.3 34.7 1.5 36.4L16.4 50L1.5 63.6C-0.3 65.3-0.3 68.1 1.5 69.8L7 74.8C8.5 76.1 10.7 76.2 12.3 75L29.4 62L68.8 97.9C70.7 99.8 73.5 100.3 75.9 99.1L96.5 89.2C98.7 88.1 100 85.9 100 83.5V16.5C100 14.1 98.7 11.9 96.5 10.8ZM75 72.7L45.1 50L75 27.3V72.7Z"/>
<path fill="#1f9cf0" d="M96.5 10.8L75.9 0.9C73.5-0.3 70.7 0.2 68.8 2.1L75 27.3V72.7L68.8 97.9C70.7 99.8 73.5 100.3 75.9 99.1L96.5 89.2C98.7 88.1 100 85.9 100 83.5V16.5C100 14.1 98.7 11.9 96.5 10.8Z"/>
</g>
<!-- underlines -->
<g fill="#9bcf9b"><rect x="343.2" y="766" width="39.5" height="2"/><rect x="735" y="766" width="32.3" height="2"/><rect x="767.3" y="766" width="8" height="2" opacity="0.5"/><rect x="784" y="766" width="40" height="2"/><rect x="829" y="766" width="48" height="2"/></g>
<!-- tray -->
<path d="M999 751.5Q1008 754.5 1014 747Q1018 742 1017.5 737.5Q1022.5 742 1021.5 749Q1020 758.5 1010 759Q1003 759 999 751.5Z" fill="url(#moonG)"/>
<circle cx="1016" cy="741.4" r="5.8" fill="#c41e1e"/>
<text x="1016" y="744.6" font-family="Liberation Sans" font-size="8.5" font-weight="bold" fill="#fff" text-anchor="middle">6</text>
<g fill="none" stroke="#1a1a1a" stroke-width="1.2">
<path d="M1085.5 750.5L1091.3 744.7L1097 750.5"/>
<rect x="1111" y="745" width="11" height="6.5"/><path d="M1123 747V749.5M1107.5 745.5H1111M1109 743V745.5M1109 751V753"/>
<path d="M1134.5 754Q1135 744 1146 743M1137.5 754Q1138 747 1146 746M1140.5 754Q1141 750 1145.5 749.5"/>
<path d="M1155 746H1158L1162 742.5V754L1158 750.5H1155Z"/><path d="M1164.5 746Q1166 748.2 1164.5 750.5M1167 744Q1169.5 748.2 1167 752.5M1169.5 742.5Q1173 748.2 1169.5 754"/>
<rect x="1179.5" y="742.5" width="22" height="11" rx="1"/>
</g>
<rect x="1113" y="746.5" width="7" height="3.5" fill="#1a1a1a"/>
<circle cx="1144.8" cy="752.8" r="1.4" fill="#1a1a1a"/>
<g fill="#1a1a1a"><rect x="1182" y="745" width="16" height="1"/><rect x="1182" y="747.5" width="16" height="1"/><rect x="1184" y="750" width="12" height="1"/></g>
<path d="M1325 740.2H1341V750H1331L1327.5 753.5V750H1325Z" fill="#111"/>
<g fill="#fff"><rect x="1327.5" y="743" width="11" height="1"/><rect x="1327.5" y="745.3" width="11" height="1"/><rect x="1327.5" y="747.6" width="8" height="1"/></g>
<circle cx="1340.5" cy="755.4" r="7.8" fill="#e6e6e6" stroke="#7a7a7a" stroke-width="0.8"/>
<text x="1340.7" y="759.6" font-family="Liberation Sans" font-size="11.5" fill="#1a1a1a" text-anchor="middle">3</text>
<rect x="1361" y="729" width="1" height="39" fill="#b8b8b8"/>
</svg>
</body></html>
